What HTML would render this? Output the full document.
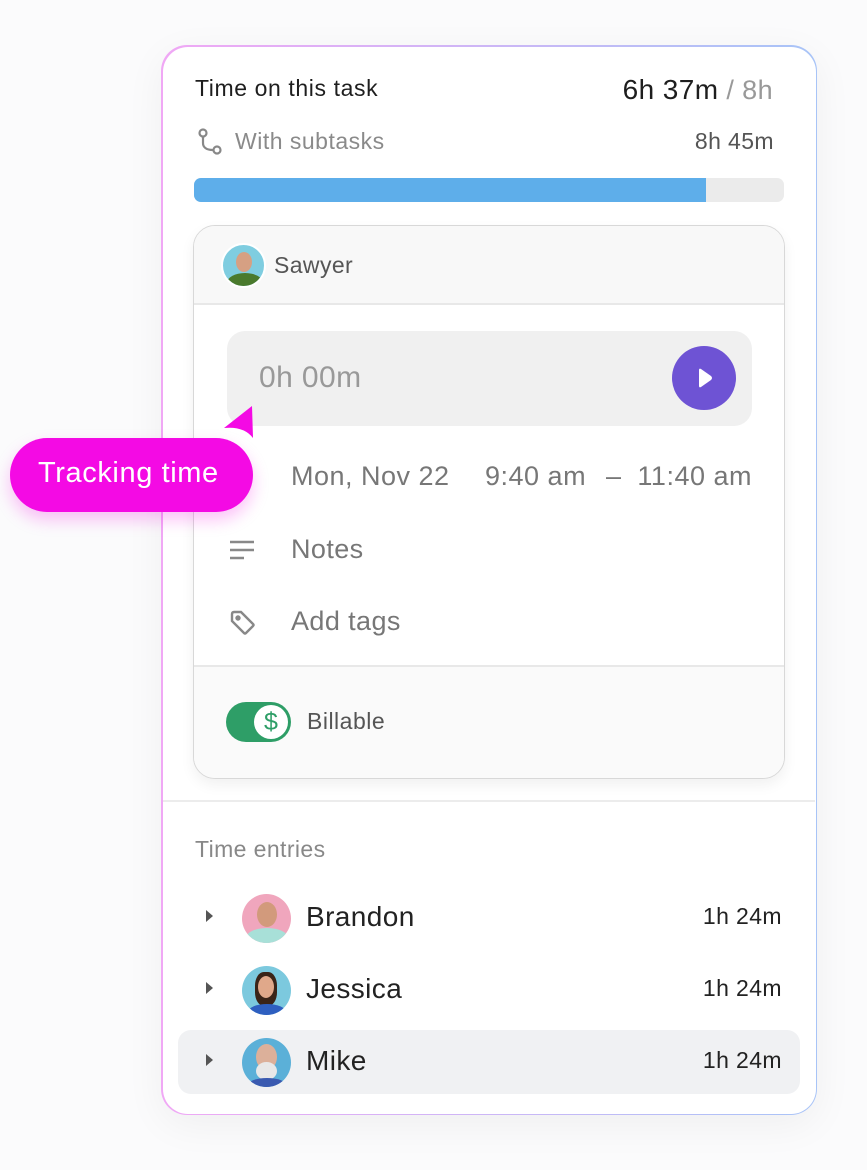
<!DOCTYPE html>
<html><head><style>
*{margin:0;padding:0;box-sizing:border-box}
body{width:867px;height:1170px;background:#fbfbfc;font-family:"Liberation Sans",sans-serif;position:relative;overflow:hidden}
.abs{position:absolute}
.card{left:161px;top:45px;width:656px;height:1070px;border-radius:26px;background:linear-gradient(90deg,#f0a8f5,#a8c4f7);padding:1.5px;box-shadow:0 10px 40px rgba(0,0,0,.05)}
.ci{width:100%;height:100%;border-radius:25px;background:#fff;position:relative}
.t{position:absolute;white-space:nowrap;letter-spacing:0.4px}
.av{position:absolute;border-radius:50%;overflow:hidden}
</style></head><body>
<div class="abs card"><div class="ci"></div></div>

<div class="t" style="left:195px;top:75px;font-size:23px;color:#1e1e1e;letter-spacing:0.6px">Time on this task</div>
<div class="t" style="right:94px;top:74px;font-size:28px;color:#1e1e1e">6h 37m<span style="color:#999;font-size:27px"> / 8h</span></div>
<svg class="abs" style="left:197px;top:128px" width="26" height="28" viewBox="0 0 26 28" fill="none" stroke="#888" stroke-width="2.2"><circle cx="6" cy="5" r="3.5"/><circle cx="20" cy="22" r="3.5"/><path d="M6 9v6c0 4 3 7 10 7"/></svg>
<div class="t" style="left:235px;top:128px;font-size:23px;color:#8a8a8a;letter-spacing:0.5px">With subtasks</div>
<div class="t" style="right:93px;top:128px;font-size:23px;color:#555;letter-spacing:0.4px">8h 45m</div>
<div class="abs" style="left:194px;top:178px;width:590px;height:24px;border-radius:7px;background:#ebebeb"></div>
<div class="abs" style="left:194px;top:178px;width:512px;height:24px;border-radius:7px 0 0 7px;background:#5eaeea"></div>

<div class="abs" style="left:193px;top:225px;width:592px;height:554px;border-radius:22px;border:1px solid #d8d8d8;background:#fff;overflow:hidden;box-shadow:0 6px 14px rgba(0,0,0,.06)">
 <div class="abs" style="left:0;top:0;width:100%;height:79px;background:#f8f8f8;border-bottom:2px solid #e8e8e8"></div>
 <div class="abs" style="left:0;top:439px;width:100%;height:115px;background:#fafafa;border-top:2px solid #e8e8e8"></div>
</div>
<div class="av" style="left:221px;top:243px;width:45px;height:45px;background:#7fcde0;border:2px solid #fff"><div class="abs" style="left:13px;top:7px;width:16px;height:20px;border-radius:50%;background:#d6a083"></div><div class="abs" style="left:4px;top:28px;width:36px;height:20px;border-radius:50%;background:#4a7a2d"></div></div>
<div class="t" style="left:274px;top:252px;font-size:23px;color:#555">Sawyer</div>

<div class="abs" style="left:227px;top:331px;width:525px;height:95px;border-radius:18px;background:#f0f0f0"></div>
<div class="t" style="left:259px;top:361px;font-size:30px;color:#999">0h 00m</div>
<div class="abs" style="left:672px;top:346px;width:64px;height:64px;border-radius:50%;background:#6e53d4"></div>
<svg class="abs" style="left:694px;top:366px" width="22" height="24" viewBox="0 0 22 24"><path d="M5 4Q5 2 7 3L17 10Q19 12 17 14L7 21Q5 22 5 20Z" fill="#fff"/></svg>

<div class="t" style="left:291px;top:461px;font-size:27px;color:#777;letter-spacing:0.5px">Mon, Nov 22</div>
<div class="t" style="left:485px;top:461px;font-size:27px;color:#777;letter-spacing:0.5px">9:40 am</div>
<div class="t" style="left:606px;top:461px;font-size:27px;color:#777">–</div>
<div class="t" style="right:115px;top:461px;font-size:27px;color:#777;letter-spacing:0.5px">11:40 am</div>
<svg class="abs" style="left:229px;top:539px" width="26" height="22" viewBox="0 0 26 22" stroke="#888" stroke-width="2.4"><path d="M1 3h24M1 11h24M1 19h14"/></svg>
<div class="t" style="left:291px;top:534px;font-size:27px;color:#777">Notes</div>
<svg class="abs" style="left:229px;top:609px" width="27" height="27" viewBox="0 0 27 27" fill="none" stroke="#888" stroke-width="2.4"><path d="M3 5Q3 3 5 3H12L24 15Q25 16 24 17L17 24Q16 25 15 24L3 12Z"/><circle cx="9" cy="9" r="1.5" fill="#888"/></svg>
<div class="t" style="left:291px;top:606px;font-size:27px;color:#777">Add tags</div>

<div class="abs" style="left:226px;top:702px;width:65px;height:40px;border-radius:20px;background:#2e9e67"></div>
<div class="abs" style="left:254px;top:705px;width:34px;height:34px;border-radius:50%;background:#fff;color:#2e9e67;font-size:25px;text-align:center;line-height:34px">$</div>
<div class="t" style="left:307px;top:708px;font-size:23px;color:#555;letter-spacing:0.5px">Billable</div>

<div class="abs" style="left:10px;top:438px;width:243px;height:74px;border-radius:37px;background:#f40ae4;box-shadow:0 8px 16px rgba(244,10,228,.25)"></div>
<svg class="abs" style="left:222px;top:404px" width="34" height="36" viewBox="0 0 34 36"><path d="M30 2L31 34Q22 22 2 24Z" fill="#f40ae4"/></svg>
<div class="t" style="left:38px;top:457px;font-size:29px;color:#fff;letter-spacing:0.6px">Tracking time</div>

<div class="abs" style="left:163px;top:800px;width:652px;height:2px;background:#ececec"></div>
<div class="t" style="left:195px;top:836px;font-size:23px;color:#888">Time entries</div>

<div class="abs" style="left:178px;top:1030px;width:622px;height:64px;border-radius:13px;background:#f0f1f3"></div>
<svg class="abs" style="left:204px;top:909px" width="12" height="170"><path d="M2 1l7 6-7 6z" fill="#555"/><path d="M2 73l7 6-7 6z" fill="#555"/><path d="M2 145l7 6-7 6z" fill="#555"/></svg>
<div class="av" style="left:242px;top:894px;width:49px;height:49px;background:#f0a6bd"><div class="abs" style="left:15px;top:8px;width:20px;height:25px;border-radius:50%;background:#d29a7c"></div><div class="abs" style="left:4px;top:34px;width:42px;height:20px;border-radius:50%;background:#a8e0d8"></div></div>
<div class="t" style="left:306px;top:901px;font-size:28px;color:#222">Brandon</div>
<div class="t" style="right:85px;top:903px;font-size:23px;color:#222">1h 24m</div>
<div class="av" style="left:242px;top:966px;width:49px;height:49px;background:#7cc9de"><div class="abs" style="left:13px;top:6px;width:22px;height:34px;border-radius:40%;background:#3a2418"></div><div class="abs" style="left:16px;top:10px;width:16px;height:22px;border-radius:50%;background:#e0a88a"></div><div class="abs" style="left:6px;top:38px;width:38px;height:16px;border-radius:50%;background:#2e5fc0"></div></div>
<div class="t" style="left:306px;top:973px;font-size:28px;color:#222">Jessica</div>
<div class="t" style="right:85px;top:975px;font-size:23px;color:#222">1h 24m</div>
<div class="av" style="left:242px;top:1038px;width:49px;height:49px;background:#5bb0d8"><div class="abs" style="left:14px;top:6px;width:21px;height:26px;border-radius:50%;background:#dcb09a"></div><div class="abs" style="left:14px;top:24px;width:21px;height:18px;border-radius:50%;background:#e8e8e8"></div><div class="abs" style="left:6px;top:40px;width:38px;height:14px;border-radius:50%;background:#3a5ab0"></div></div>
<div class="t" style="left:306px;top:1045px;font-size:28px;color:#222">Mike</div>
<div class="t" style="right:85px;top:1047px;font-size:23px;color:#222">1h 24m</div>
</body></html>
